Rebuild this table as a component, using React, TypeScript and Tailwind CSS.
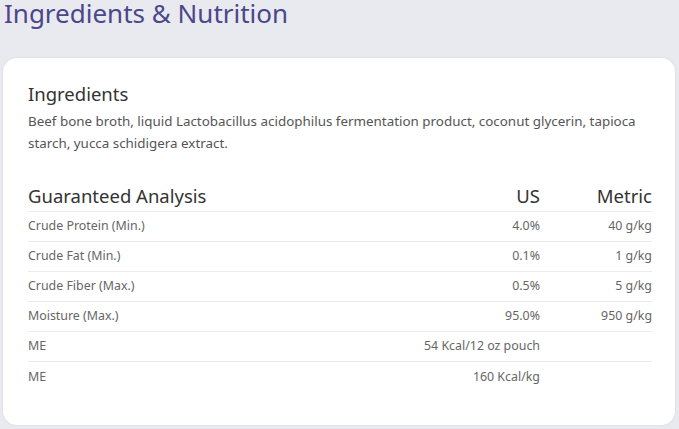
import React from "react";

const rows: [string, string, string][] = [
  ["Crude Protein (Min.)", "4.0%", "40 g/kg"],
  ["Crude Fat (Min.)", "0.1%", "1 g/kg"],
  ["Crude Fiber (Max.)", "0.5%", "5 g/kg"],
  ["Moisture (Max.)", "95.0%", "950 g/kg"],
  ["ME", "54 Kcal/12 oz pouch", ""],
  ["ME", "160 Kcal/kg", ""],
];

export default function App() {
  return (
    <div
      className="w-[679px] h-[429px] overflow-hidden bg-[#e9eaf0] px-[3px] pt-[1px]"
      style={{ fontFamily: "'Noto Sans', Lato, sans-serif" }}
    >
      <h1 className="text-[26px] leading-[24px] text-[#4b4789] pl-[1px]">
        Ingredients &amp; Nutrition
      </h1>
      <div className="mt-[33px] w-[672px] h-[367px] bg-white rounded-[14px] shadow-[0_0_3px_rgba(0,0,0,0.08)] pl-[25px] pr-[23px] pt-[24px]">
        <h2 className="text-[18.5px] leading-[24px] text-[#333]">Ingredients</h2>
        <p className="mt-[4px] text-[13.4px] leading-[22px] text-[#555]">
          Beef bone broth, liquid Lactobacillus acidophilus fermentation product,
          coconut glycerin, tapioca starch, yucca schidigera extract.
        </p>
        <div className="mt-[27px]">
          <div className="flex items-center h-[31px] border-b border-[#ececec] text-[18.5px] text-[#333]">
            <div className="flex-1">Guaranteed Analysis</div>
            <div className="text-right">US</div>
            <div className="w-[112px] text-right">Metric</div>
          </div>
          {rows.map((r, i) => (
            <div
              key={i}
              className={
                "flex items-center h-[30px] text-[12.4px] text-[#666] " +
                (i < rows.length - 1 ? "border-b border-[#ececec]" : "")
              }
            >
              <div className="flex-1">{r[0]}</div>
              <div className="text-right">{r[1]}</div>
              <div className="w-[112px] text-right">{r[2]}</div>
            </div>
          ))}
        </div>
      </div>
    </div>
  );
}
